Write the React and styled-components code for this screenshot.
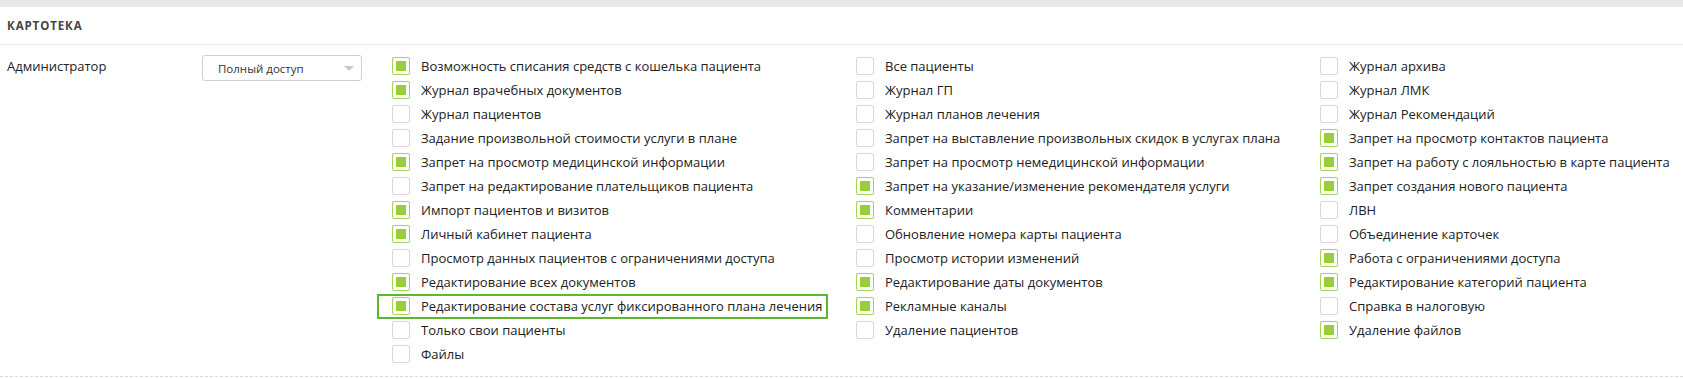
import React from 'react';
import styled, { createGlobalStyle } from 'styled-components';

const GlobalStyle = createGlobalStyle`
  body {
    margin: 0;
    background: #fff;
    font-family: 'Open Sans', 'Liberation Sans', sans-serif;
    color: #222;
  }
`;

const columns = [
  [
    ['Возможность списания средств с кошелька пациента', true],
    ['Журнал врачебных документов', true],
    ['Журнал пациентов', false],
    ['Задание произвольной стоимости услуги в плане', false],
    ['Запрет на просмотр медицинской информации', true],
    ['Запрет на редактирование плательщиков пациента', false],
    ['Импорт пациентов и визитов', true],
    ['Личный кабинет пациента', true],
    ['Просмотр данных пациентов с ограничениями доступа', false],
    ['Редактирование всех документов', true],
    ['Редактирование состава услуг фиксированного плана лечения', true, true],
    ['Только свои пациенты', false],
    ['Файлы', false],
  ],
  [
    ['Все пациенты', false],
    ['Журнал ГП', false],
    ['Журнал планов лечения', false],
    ['Запрет на выставление произвольных скидок в услугах плана', false],
    ['Запрет на просмотр немедицинской информации', false],
    ['Запрет на указание/изменение рекомендателя услуги', true],
    ['Комментарии', true],
    ['Обновление номера карты пациента', false],
    ['Просмотр истории изменений', false],
    ['Редактирование даты документов', true],
    ['Рекламные каналы', true],
    ['Удаление пациентов', false],
  ],
  [
    ['Журнал архива', false],
    ['Журнал ЛМК', false],
    ['Журнал Рекомендаций', false],
    ['Запрет на просмотр контактов пациента', true],
    ['Запрет на работу с лояльностью в карте пациента', true],
    ['Запрет создания нового пациента', true],
    ['ЛВН', false],
    ['Объединение карточек', false],
    ['Работа с ограничениями доступа', true],
    ['Редактирование категорий пациента', true],
    ['Справка в налоговую', false],
    ['Удаление файлов', true],
  ],
];

export default function App() {
  return (
    <Page>
      <GlobalStyle />
      <TopBar />
      <SectionHeader>Картотека</SectionHeader>
      <RoleRow>
        <RoleName>Администратор</RoleName>
        <Select>
          Полный доступ
          <Arrow />
        </Select>
        <Grid>
          {columns.map((col, i) => (
            <Column key={i}>
              {col.map(([label, checked, focused]) => (
                <Item key={label} $focused={focused}>
                  <Box $checked={checked} />
                  <Label>{label}</Label>
                </Item>
              ))}
            </Column>
          ))}
        </Grid>
      </RoleRow>
    </Page>
  );
}

const Page = styled.div`
  overflow: hidden;
`;

const TopBar = styled.div`
  height: 7px;
  background: #e7e7e7;
`;

const SectionHeader = styled.div`
  height: 37px;
  padding: 0 7px;
  display: flex;
  align-items: center;
  border-bottom: 1px solid #ececec;
  font-size: 11.5px;
  font-weight: 700;
  letter-spacing: 0.9px;
  text-transform: uppercase;
  color: #444;
`;

const RoleRow = styled.div`
  display: flex;
  align-items: flex-start;
  padding: 9px 0 10px 7px;
  border-bottom: 1px dashed #dcdcdc;
`;

const RoleName = styled.div`
  flex: none;
  width: 195px;
  font-size: 13px;
  line-height: 24px;
  color: #222;
`;

const Select = styled.div`
  position: relative;
  flex: none;
  box-sizing: border-box;
  width: 160px;
  height: 26px;
  margin-top: 1px;
  margin-right: 30px;
  padding: 0 15px;
  display: flex;
  align-items: center;
  border: 1px solid #cfcfcf;
  border-radius: 3px;
  font-size: 11.5px;
  white-space: nowrap;
  color: #333;
`;

const Arrow = styled.span`
  position: absolute;
  right: 7px;
  top: 10px;
  border-left: 5px solid transparent;
  border-right: 5px solid transparent;
  border-top: 5px solid #c8c8c8;
`;

const Grid = styled.div`
  flex: 1;
  min-width: 0;
  display: grid;
  grid-template-columns: 464px 464px 1fr;
`;

const Column = styled.div`
  display: flex;
  flex-direction: column;
`;

const Item = styled.div`
  position: relative;
  display: flex;
  align-items: center;
  gap: 11px;
  width: fit-content;
  height: 24px;
  font-size: 13px;

  ${p => p.$focused && `
    &::after {
      content: '';
      position: absolute;
      left: -15px;
      right: -6px;
      top: 0;
      bottom: -1px;
      border: 2px solid #5cb82c;
    }
  `}
`;

const Box = styled.span`
  position: relative;
  box-sizing: border-box;
  width: 18px;
  height: 18px;
  flex: none;
  border: 1px solid ${p => (p.$checked ? '#a3d651' : '#d6d6d6')};
  border-radius: 2px;
  background: #fff;

  ${p => p.$checked && `
    &::before {
      content: '';
      position: absolute;
      left: 3px;
      top: 3px;
      width: 10px;
      height: 10px;
      background: #9acd3c;
    }
  `}
`;

const Label = styled.span`
  white-space: nowrap;
  color: #222;
`;
